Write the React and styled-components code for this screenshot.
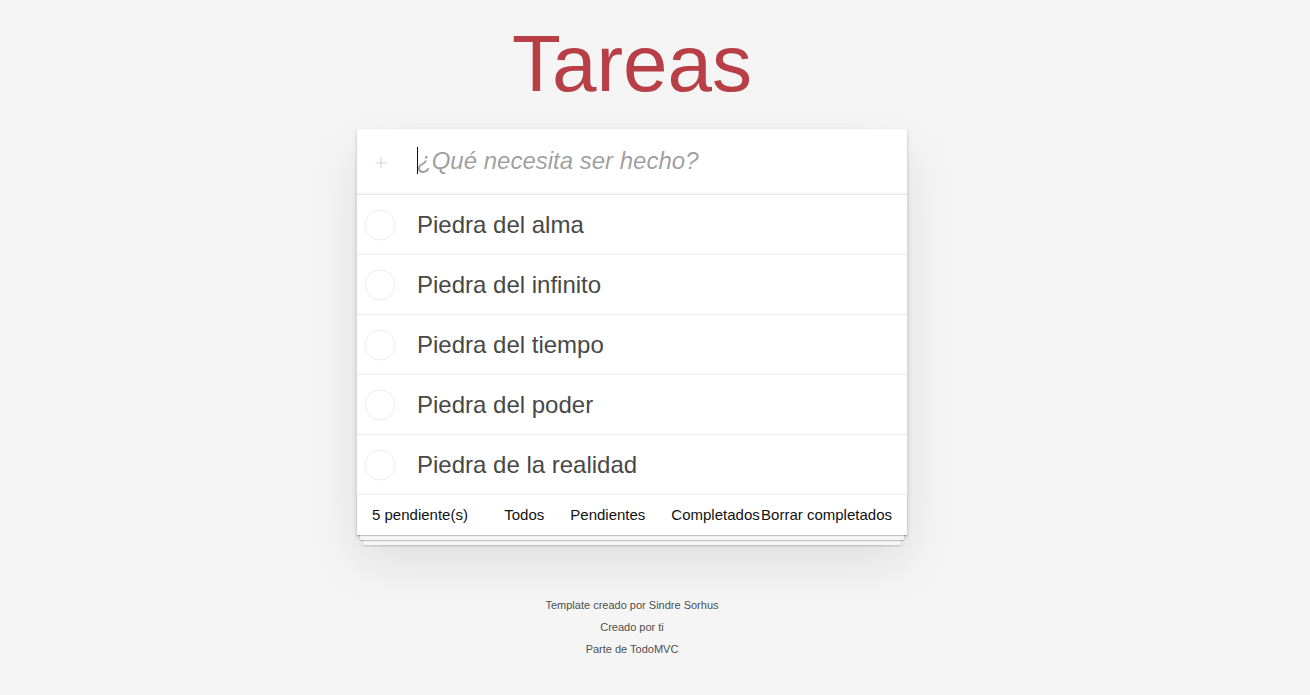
import React from 'react';
import styled, { createGlobalStyle } from 'styled-components';

const todos = [
  'Piedra del alma',
  'Piedra del infinito',
  'Piedra del tiempo',
  'Piedra del poder',
  'Piedra de la realidad',
];

const filters = ['Todos', 'Pendientes', 'Completados'];

const GlobalStyle = createGlobalStyle`
  html, body {
    margin: 0;
    padding: 0;
  }
  body {
    background: #f5f5f5;
    color: #111111;
    font: 14px 'Liberation Sans', Arial, Helvetica, sans-serif;
    -webkit-font-smoothing: antialiased;
  }
`;

const Shell = styled.div`
  padding-right: 46px;
`;

const Page = styled.div`
  width: 550px;
  margin: 0 auto;
  padding-top: 24px;
  display: flex;
  flex-direction: column;
`;

const Title = styled.h1`
  margin: 0 0 25px;
  font-size: 80px;
  line-height: 80px;
  font-weight: 400;
  text-align: center;
  color: #b83f45;
`;

const Card = styled.section`
  background: #fff;
  box-shadow: 0 2px 4px 0 rgba(0, 0, 0, 0.2), 0 25px 50px 0 rgba(0, 0, 0, 0.1);
`;

const Header = styled.header`
  display: flex;
  align-items: center;
  box-shadow: inset 0 -2px 1px rgba(0, 0, 0, 0.03);
  border-bottom: 1px solid #e6e6e6;
  box-sizing: border-box;
  height: 66px;
`;

const ToggleAll = styled.span`
  width: 60px;
  text-align: center;
  color: #e3e3e3;
  font-size: 22px;
  line-height: 22px;
  padding-top: 2px;
  margin-left: -6px;
  margin-right: 6px;
`;

const Caret = styled.span`
  width: 1px;
  height: 27px;
  background: #111;
  margin-right: -1px;
  margin-top: -2px;
`;

const NewTodo = styled.input`
  flex: 1;
  border: none;
  outline: none;
  background: transparent;
  padding: 0 16px 0 0;
  margin-top: -1px;
  font: 24px 'Liberation Sans', Arial, sans-serif;
  color: #484848;
  &::placeholder {
    font-style: italic;
    color: rgba(0, 0, 0, 0.4);
  }
`;

const List = styled.ul`
  list-style: none;
  margin: 0;
  padding: 0;
`;

const Item = styled.li`
  height: 60px;
  display: flex;
  align-items: center;
  border-bottom: 1px solid #ededed;
  box-sizing: border-box;
`;

const Check = styled.span`
  width: 60px;
  display: flex;
  justify-content: center;
  margin-left: -7px;
  margin-right: 7px;
  svg {
    display: block;
  }
`;

const Label = styled.span`
  font-size: 24px;
  color: #484848;
  line-height: 1.2;
  padding-top: 2px;
`;

const Footer = styled.footer`
  display: grid;
  grid-template-columns: minmax(0, 1fr) auto minmax(0, 1fr);
  align-items: center;
  height: 40px;
  box-sizing: border-box;
  padding: 0 15px 2px;
  font-size: 15px;
  color: #111;
  box-shadow: 0 1px 1px rgba(0, 0, 0, 0.2), 0 8px 0 -3px #f6f6f6,
    0 9px 1px -3px rgba(0, 0, 0, 0.2), 0 16px 0 -6px #f6f6f6,
    0 17px 2px -6px rgba(0, 0, 0, 0.2);
`;

const Count = styled.span`
  white-space: nowrap;
`;

const Filters = styled.div`
  display: flex;
  gap: 4px;
`;

const FilterLink = styled.span`
  padding: 3px 7px;
  margin: 3px;
  border: 1px solid transparent;
  white-space: nowrap;
`;

const ClearCell = styled.div`
  display: flex;
  justify-content: flex-end;
`;

const Clear = styled.span`
  flex-shrink: 0;
  white-space: nowrap;
`;

const Info = styled.footer`
  margin-top: 65px;
  text-align: center;
  color: #4d4d4d;
  font-size: 11px;
  text-shadow: 0 1px 0 rgba(255, 255, 255, 0.5);
  p {
    line-height: 1;
    margin: 0 0 11px;
  }
`;

const Circle = () => (
  <svg width="32" height="32" viewBox="0 0 32 32">
    <circle cx="16" cy="16" r="15" fill="none" stroke="#ededed" strokeWidth="1" />
  </svg>
);

const App = () => (
  <Shell>
    <GlobalStyle />
    <Page>
      <Title>Tareas</Title>
      <Card>
        <Header>
          <ToggleAll>+</ToggleAll>
          <Caret />
          <NewTodo placeholder="¿Qué necesita ser hecho?" />
        </Header>
        <List>
          {todos.map((t) => (
            <Item key={t}>
              <Check><Circle /></Check>
              <Label>{t}</Label>
            </Item>
          ))}
        </List>
        <Footer>
          <Count>5 pendiente(s)</Count>
          <Filters>
            {filters.map((f) => (
              <FilterLink key={f}>{f}</FilterLink>
            ))}
          </Filters>
          <ClearCell>
            <Clear>Borrar completados</Clear>
          </ClearCell>
        </Footer>
      </Card>
      <Info>
        <p>Template creado por Sindre Sorhus</p>
        <p>Creado por ti</p>
        <p>Parte de TodoMVC</p>
      </Info>
    </Page>
  </Shell>
);

export default App;
